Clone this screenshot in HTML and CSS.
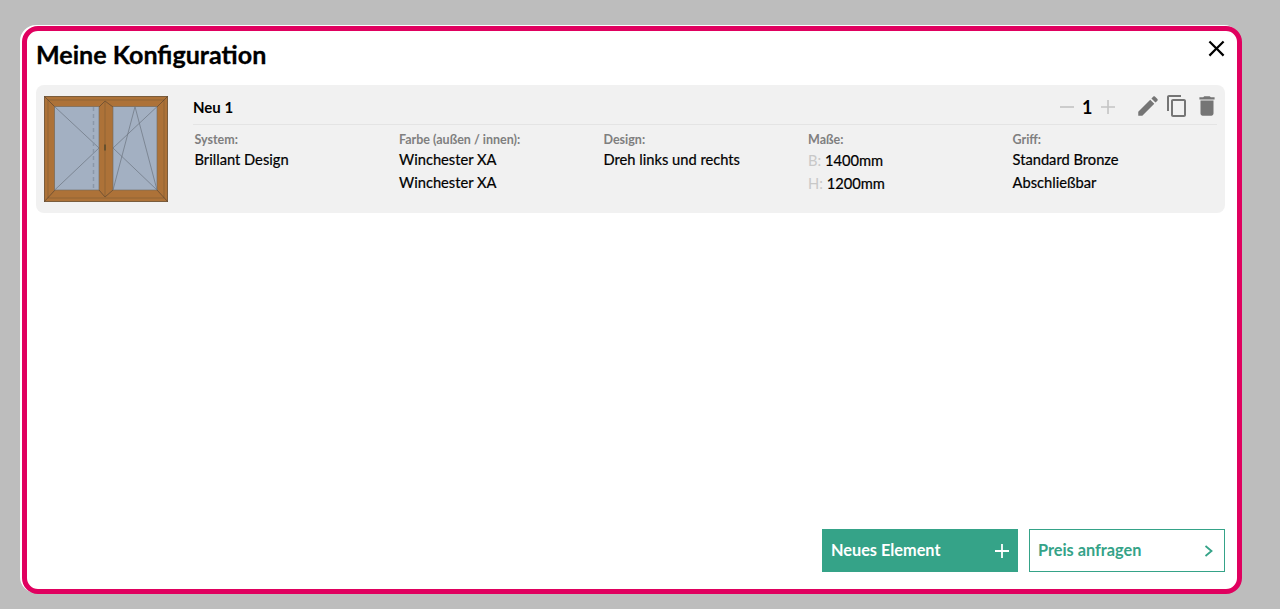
FILE: index.html
```html
<!DOCTYPE html>
<html lang="de">
<head>
<meta charset="utf-8">
<title>Meine Konfiguration</title>
<link rel="stylesheet" href="styles.css">
</head>
<body>
<main class="modal">
  <header class="modal-head">
    <h1>Meine Konfiguration</h1>
    <svg class="close" viewBox="0 0 24 24"><path d="M19 6.41L17.59 5 12 10.59 6.41 5 5 6.41 10.59 12 5 17.59 6.41 19 12 13.41 17.59 19 19 17.59 13.41 12z"/></svg>
  </header>
  <section class="card">
    <svg class="thumb" viewBox="0 0 124 106">
      <rect width="124" height="106" fill="#ad7238"/>
      <rect x="0.5" y="0.5" width="123" height="105" fill="none" stroke="#7a5c3c"/>
      <rect x="4" y="4" width="116" height="98" fill="none" stroke="#7f5a34" stroke-width="0.6"/>
      <path d="M0 0L11 11M124 0L113 11M0 106L11 94M124 106L113 94M55 11L61 5L69 11M55 94L61 101L69 94" stroke="#5d4630" stroke-width="0.7" fill="none"/>
      <path d="M61 5V101" stroke="#7f5a34" stroke-width="0.6"/>
      <rect x="10.7" y="10.7" width="44.3" height="83.3" fill="#a3b0c2" stroke="#6f6a60" stroke-width="0.6"/>
      <rect x="69" y="10.7" width="44" height="83.3" fill="#a3b0c2" stroke="#6f6a60" stroke-width="0.6"/>
      <path d="M10.7 10.7L55 52L10.7 94M113 10.7L69 52L113 94M69 94L91 10.7L113 94" fill="none" stroke="#6b7480" stroke-width="0.7"/>
      <path d="M49.5 11V94" fill="none" stroke="#8a97a9" stroke-width="1.5" stroke-dasharray="4 3"/>
      <rect x="60.2" y="48.5" width="1.6" height="6" fill="#5a4a2c"/>
    </svg>
    <div class="info">
      <div class="info-head">
        <h2>Neu 1</h2>
        <div class="qty">
          <svg class="step" viewBox="0 0 16 16"><path d="M1 8H15"/></svg>
          <span class="count">1</span>
          <svg class="step" viewBox="0 0 16 16"><path d="M1 8H15M8 1V15"/></svg>
        </div>
        <div class="tools">
          <svg class="tool tool-edit" viewBox="0 0 24 24"><path d="M3 17.25V21h3.75L17.81 9.94l-3.75-3.75L3 17.25zM20.71 7.04c.39-.39.39-1.02 0-1.41l-2.34-2.34c-.39-.39-1.02-.39-1.41 0l-1.83 1.83 3.75 3.75 1.83-1.83z"/></svg>
          <svg class="tool tool-copy" viewBox="0 0 24 24"><path d="M16 1H4c-1.1 0-2 .9-2 2v14h2V3h12V1zm3 4H8c-1.1 0-2 .9-2 2v14c0 1.1.9 2 2 2h11c1.1 0 2-.9 2-2V7c0-1.1-.9-2-2-2zm0 16H8V7h11v14z"/></svg>
          <svg class="tool tool-del" viewBox="0 0 24 24"><path d="M6 19c0 1.1.9 2 2 2h8c1.1 0 2-.9 2-2V7H6v12zM19 4h-3.5l-1-1h-5l-1 1H5v2h14V4z"/></svg>
        </div>
      </div>
      <div class="specs">
        <div class="spec"><div class="label">System:</div><div class="val">Brillant Design</div></div>
        <div class="spec"><div class="label">Farbe (außen / innen):</div><div class="val">Winchester XA</div><div class="val">Winchester XA</div></div>
        <div class="spec"><div class="label">Design:</div><div class="val">Dreh links und rechts</div></div>
        <div class="spec spec-size"><div class="label">Maße:</div><div class="val"><span class="dim">B:</span> 1400mm</div><div class="val"><span class="dim">H:</span> 1200mm</div></div>
        <div class="spec"><div class="label">Griff:</div><div class="val">Standard Bronze</div><div class="val">Abschließbar</div></div>
      </div>
    </div>
  </section>
  <footer class="actions">
    <button class="btn btn-fill" type="button"><span>Neues Element</span>
      <svg class="btn-icon" viewBox="0 0 16 16"><path d="M1 8H15M8 1V15"/></svg></button>
    <button class="btn btn-line" type="button"><span>Preis anfragen</span>
      <svg class="btn-icon btn-chev" viewBox="0 0 16 16"><path d="M4.5 3L10.5 8L4.5 13"/></svg></button>
  </footer>
</main>
</body>
</html>
```
FILE: styles.css
```css
* { box-sizing: border-box; }
html, body { height: 100%; margin: 0; }
body {
  background: #bdbdbd;
  font-family: "Lato", "Liberation Sans", sans-serif;
  color: #000;
  padding: 26px 38px 15px 22px;
  overflow: hidden;
}
.modal {
  height: 568px;
  background: #fff;
  border: 5px solid #e0005f;
  border-radius: 16px;
  box-shadow: -2px -1px 0 #fff;
  padding: 0 12px 17px 9px;
  display: flex;
  flex-direction: column;
}
.modal-head {
  height: 54px;
  display: flex;
  justify-content: space-between;
  align-items: flex-start;
}
h1 {
  margin: 8px 0 0;
  font-size: 25.1px;
  line-height: 31px;
  font-weight: 700;
  -webkit-text-stroke: 0.3px #000;
}
.close { width: 27px; height: 27px; margin: 4px -5px 0 0; fill: #000; }
.card {
  height: 128px;
  background: #f1f1f1;
  border-radius: 8px;
  padding: 11px 8px 0;
  display: flex;
  gap: 25px;
}
.thumb { width: 124px; height: 106px; flex: none; }
.info { flex: 1; min-width: 0; }
.info-head {
  height: 29px;
  border-bottom: 1px solid #e4e4e4;
  display: flex;
  align-items: center;
}
h2 { margin: 0; font-size: 15px; font-weight: 700; flex: 1; position: relative; top: -3px; }
.qty { display: flex; align-items: center; gap: 7.5px; margin-right: 19px; position: relative; top: -3px; }
.step { width: 16px; height: 16px; fill: none; stroke: #c4c4c4; stroke-width: 1.6; }
.count { font-size: 18px; font-weight: 700; line-height: 20px; }
.tools { display: flex; align-items: center; position: relative; top: -4px; }
.tool { fill: #757575; flex: none; }
.tool-edit { width: 26px; height: 26px; }
.tool-copy { width: 24px; height: 24px; margin-left: 4px; }
.tool-del { width: 26px; height: 26px; margin-left: 5px; margin-right: -3px; }
.specs {
  display: grid;
  grid-template-columns: repeat(5, 204.5px);
  padding: 7px 0 0 1.5px;
}
.label { font-size: 12.5px; line-height: 16px; font-weight: 700; color: #7f7f7f; }
.spec-size .label { margin-bottom: 1px; }
.val { font-size: 14.7px; line-height: 23px; -webkit-text-stroke: 0.2px #000; }
.dim { color: #c8c8c8; -webkit-text-stroke: 0; }
.actions {
  margin-top: auto;
  display: flex;
  justify-content: flex-end;
  gap: 11px;
}
.btn {
  width: 196px;
  height: 43px;
  font: 700 16.3px "Lato", "Liberation Sans", sans-serif;
  display: flex;
  align-items: center;
  justify-content: space-between;
  padding: 0 8px 2px 8px;
  border: 1px solid #35a388;
  border-radius: 0;
}
.btn-fill { background: #35a388; color: #fff; }
.btn-line { background: #fff; color: #35a388; }
.btn-icon { width: 16px; height: 16px; fill: none; stroke: #fff; stroke-width: 1.8; margin: 2px -1px 0 0; }
.btn-chev { stroke: #35a388; }
```
